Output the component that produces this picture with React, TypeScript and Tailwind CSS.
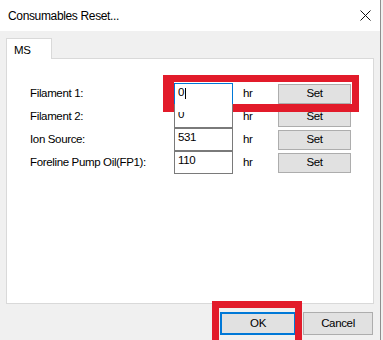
import React from "react";

const rows = [
  { label: "Filament 1:", value: "0" },
  { label: "Filament 2:", value: "0" },
  { label: "Ion Source:", value: "531" },
  { label: "Foreline Pump Oil(FP1):", value: "110" },
];

const App = () => {
  return (
    <div
      className="relative w-[383px] h-[340px] overflow-hidden bg-[#f0f0f0] text-[11.5px] tracking-[-0.35px] text-black"
      style={{ fontFamily: '"Liberation Sans", Arial, sans-serif' }}
    >
      {/* Window */}
      <div className="w-[381px] h-[340px] border-r border-[#8e8e8e] bg-[#f0f0f0]">
        {/* Title bar */}
        <div className="h-[31px] bg-white flex items-center justify-between pl-[8px] pr-[9px]">
          <span className="text-[12px] tracking-[-0.35px]">Consumables Reset...</span>
          <svg width="11" height="11" viewBox="0 0 11 11" className="mb-[1px]">
            <path d="M0.5 0.5 L10.5 10.5 M10.5 0.5 L0.5 10.5" stroke="#111" strokeWidth="1" />
          </svg>
        </div>

        {/* Tab + panel */}
        <div className="pl-[6px] pt-[7px]">
          <div className="relative z-10 -mb-px w-[46px] h-[21px] border border-b-0 border-[#d9d9d9] bg-white pl-[7px] pt-[3px]">
            MS
          </div>
          <div className="w-[368px] h-[246px] border border-[#d9d9d9] bg-white pt-[23px] pl-[23px]">
            <div className="flex flex-col">
              {rows.map((row, i) => (
                <div key={row.label} className="flex items-center h-[23px]">
                  <span className="w-[144px]">{row.label}</span>
                  <div
                    className={
                      i === 0
                        ? "w-[59px] h-[22px] border border-[#0078d7] bg-white pl-[3px] flex items-center"
                        : "w-[59px] h-[23px] border border-[#7a7a7a] bg-white pl-[3px] flex items-center -mt-px"
                    }
                  >
                    <span className="leading-none pb-[2px]">{row.value}</span>
                    {i === 0 && <span className="ml-[1px] w-px h-[11px] bg-black" />}
                  </div>
                  <span className="ml-[10px] w-[35px]">hr</span>
                  <button className="w-[73px] h-[20px] border border-[#adadad] bg-[#e1e1e1] text-center leading-none">
                    Set
                  </button>
                </div>
              ))}
            </div>
          </div>
        </div>

        {/* Bottom buttons */}
        <div className="flex gap-[7px] pl-[220px] pt-[8px]">
          <button className="w-[76px] h-[23px] border-2 border-[#0078d7] bg-[#e1e1e1] leading-none">OK</button>
          <button className="w-[70px] h-[23px] border border-[#adadad] bg-[#e1e1e1] leading-none">Cancel</button>
        </div>
      </div>

      {/* Red highlight around Filament 1 row */}
      <div className="absolute left-[163px] top-[75px] w-[196px] h-[7px] bg-[#e21b2a]" />
      <div className="absolute left-[163px] top-[75px] w-[11px] h-[37px] bg-[#e21b2a]" />
      <div className="absolute left-[352px] top-[75px] w-[7px] h-[37px] bg-[#e21b2a]" />
      <div className="absolute left-[233px] top-[104px] w-[126px] h-[8px] bg-[#e21b2a]" />
      <div className="absolute left-[174px] top-[104px] w-[59px] h-[8px] bg-white border-x border-[#7a7a7a]" />

      {/* Red highlight around OK */}
      <div className="absolute left-[212px] top-[301px] w-[90px] h-[39px] border-[7px] border-b-0 border-[#e21b2a]" />
    </div>
  );
};

export default App;
